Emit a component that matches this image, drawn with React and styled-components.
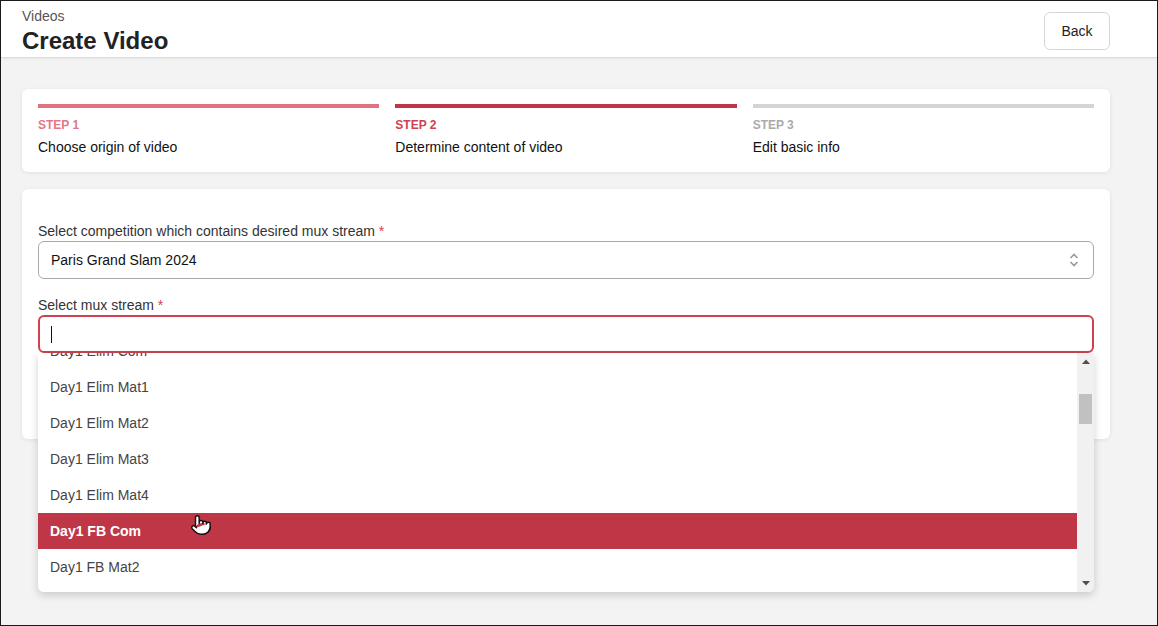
import React, { useEffect, useRef } from "react";
import styled, { createGlobalStyle } from "styled-components";
import { Pointer } from "lucide-react";

const GlobalStyle = createGlobalStyle`
  html, body { margin: 0; padding: 0; }
  body {
    font-family: "Liberation Sans", Arial, sans-serif;
    background: #f3f3f3;
    color: #222;
  }
  * { box-sizing: border-box; }
`;

const steps = [
  { label: "STEP 1", text: "Choose origin of video", state: "done" },
  { label: "STEP 2", text: "Determine content of video", state: "active" },
  { label: "STEP 3", text: "Edit basic info", state: "todo" },
];

const streams = [
  "Day1 Prelim Com",
  "Day1 Prelim Mat1",
  "Day1 Prelim Mat2",
  "Day1 Prelim Mat3",
  "Day1 Prelim Mat4",
  "Day1 Elim Com",
  "Day1 Elim Mat1",
  "Day1 Elim Mat2",
  "Day1 Elim Mat3",
  "Day1 Elim Mat4",
  "Day1 FB Com",
  "Day1 FB Mat2",
  "Day1 FB Mat3",
  "Day1 FB Mat4",
  "Day2 Elim Com",
];

const barColors = { done: "#df7380", active: "#bf3747", todo: "#d4d4d4" };
const labelColors = { done: "#e07a86", active: "#d0404f", todo: "#aaaaaa" };

const App = () => {
  const listRef = useRef(null);

  useEffect(() => {
    if (listRef.current) listRef.current.scrollTop = 5 * 36 + 20;
  }, []);

  return (
    <Frame>
      <GlobalStyle />
      <Header>
        <TitleBlock>
          <Crumb>Videos</Crumb>
          <Title>Create Video</Title>
        </TitleBlock>
        <BackButton>Back</BackButton>
      </Header>
      <Body>
        <Card $pad="15px 16px 16px">
          <Steps>
            {steps.map((s) => (
              <Step key={s.label}>
                <Bar $state={s.state} />
                <StepLabel $state={s.state}>{s.label}</StepLabel>
                <StepText>{s.text}</StepText>
              </Step>
            ))}
          </Steps>
        </Card>
        <Card $pad="34px 16px 86px">
          <Field>
            <Label>
              Select competition which contains desired mux stream <Req>*</Req>
            </Label>
            <SelectBox>
              <span>Paris Grand Slam 2024</span>
              <svg width="10" height="16" viewBox="0 0 10 16" fill="none">
                <path d="M1.5 6 L5 2.5 L8.5 6" stroke="#999" strokeWidth="1.6" />
                <path d="M1.5 10 L5 13.5 L8.5 10" stroke="#999" strokeWidth="1.6" />
              </svg>
            </SelectBox>
          </Field>
          <Field>
            <Label>
              Select mux stream <Req>*</Req>
            </Label>
            <ComboWrap>
              <Input>
                <Caret />
              </Input>
              <Dropdown>
                <List ref={listRef}>
                  {streams.map((name) => (
                    <Option key={name} $active={name === "Day1 FB Com"}>
                      {name}
                    </Option>
                  ))}
                </List>
                <ScrollTrack>
                  <Arrow>
                    <svg width="8" height="5" viewBox="0 0 8 5">
                      <path d="M0 5 L4 0.5 L8 5 Z" fill="#505050" />
                    </svg>
                  </Arrow>
                  <ThumbArea>
                    <Thumb />
                  </ThumbArea>
                  <Arrow>
                    <svg width="8" height="5" viewBox="0 0 8 5">
                      <path d="M0 0 L8 0 L4 4.5 Z" fill="#505050" />
                    </svg>
                  </Arrow>
                </ScrollTrack>
                <Hand>
                  <Pointer size={22} fill="#fff" stroke="#111" strokeWidth={1.6} />
                </Hand>
              </Dropdown>
            </ComboWrap>
          </Field>
        </Card>
      </Body>
    </Frame>
  );
};

export default App;

const Frame = styled.div`
  width: 1158px;
  height: 626px;
  border: 1px solid #1a1a1a;
  background: #f3f3f3;
  overflow: hidden;
  display: flex;
  flex-direction: column;
`;

const Header = styled.div`
  background: #fff;
  height: 57px;
  border-bottom: 1px solid #dcdcdc;
  box-shadow: 0 1px 3px rgba(0, 0, 0, 0.06);
  display: flex;
  justify-content: space-between;
  align-items: flex-start;
  padding: 0 47px 0 21px;
`;

const TitleBlock = styled.div`
  display: flex;
  flex-direction: column;
  padding-top: 7px;
`;

const Crumb = styled.div`
  font-size: 14px;
  color: #555;
  line-height: 16px;
`;

const Title = styled.h1`
  margin: 3px 0 0;
  font-size: 24px;
  font-weight: 700;
  color: #222;
  line-height: 28px;
`;

const BackButton = styled.button`
  margin-top: 11px;
  width: 66px;
  height: 38px;
  background: #fff;
  border: 1px solid #d6d6d6;
  border-radius: 6px;
  font-family: inherit;
  font-size: 14px;
  color: #222;
`;

const Body = styled.div`
  padding: 31px 47px 0 21px;
  display: flex;
  flex-direction: column;
  gap: 17px;
`;

const Card = styled.div`
  background: #fff;
  border-radius: 6px;
  box-shadow: 0 1px 4px rgba(0, 0, 0, 0.08);
  padding: ${(p) => p.$pad};
`;

const Steps = styled.div`
  display: grid;
  grid-template-columns: repeat(3, 1fr);
  gap: 16px;
`;

const Step = styled.div`
  display: flex;
  flex-direction: column;
`;

const Bar = styled.div`
  height: 4px;
  background: ${(p) => barColors[p.$state]};
`;

const StepLabel = styled.div`
  margin-top: 10px;
  font-size: 12px;
  font-weight: 700;
  color: ${(p) => labelColors[p.$state]};
  line-height: 14px;
`;

const StepText = styled.div`
  margin-top: 7px;
  font-size: 14px;
  color: #111;
  line-height: 17px;
`;

const Field = styled.div`
  display: flex;
  flex-direction: column;
  & + & {
    margin-top: 18px;
  }
`;

const Label = styled.div`
  font-size: 14px;
  color: #333;
  line-height: 16px;
  margin-bottom: 2px;
`;

const Req = styled.span`
  color: #d0404f;
`;

const SelectBox = styled.div`
  height: 38px;
  border: 1px solid #a9a9a9;
  border-radius: 6px;
  display: flex;
  align-items: center;
  justify-content: space-between;
  padding: 0 14px 0 12px;
  font-size: 14px;
  color: #111;
`;

const ComboWrap = styled.div`
  position: relative;
`;

const Input = styled.div`
  height: 38px;
  border: 2px solid #d0404f;
  border-radius: 6px;
  display: flex;
  align-items: center;
  padding: 0 11px;
`;

const Caret = styled.div`
  width: 1px;
  height: 17px;
  background: #111;
`;

const Dropdown = styled.div`
  position: absolute;
  left: 0;
  right: 0;
  top: 38px;
  height: 239px;
  background: #fff;
  border-radius: 0 0 6px 6px;
  box-shadow: 0 3px 8px rgba(0, 0, 0, 0.18);
  display: flex;
  overflow: hidden;
  z-index: 5;
`;

const List = styled.div`
  flex: 1;
  overflow: hidden;
`;

const Option = styled.div`
  height: 36px;
  display: flex;
  align-items: center;
  padding: 0 12px;
  font-size: 14px;
  font-weight: ${(p) => (p.$active ? 700 : 400)};
  color: ${(p) => (p.$active ? "#fff" : "#444")};
  background: ${(p) => (p.$active ? "#bf3747" : "#fff")};
`;

const ScrollTrack = styled.div`
  width: 17px;
  background: #f1f1f1;
  display: flex;
  flex-direction: column;
  align-items: center;
`;

const Arrow = styled.div`
  height: 17px;
  display: flex;
  align-items: center;
  justify-content: center;
`;

const ThumbArea = styled.div`
  flex: 1;
  width: 100%;
  padding: 24px 2px 0;
`;

const Thumb = styled.div`
  height: 30px;
  background: #c1c1c1;
`;

const Hand = styled.div`
  position: absolute;
  left: 152px;
  top: 161px;
  pointer-events: none;
`;
